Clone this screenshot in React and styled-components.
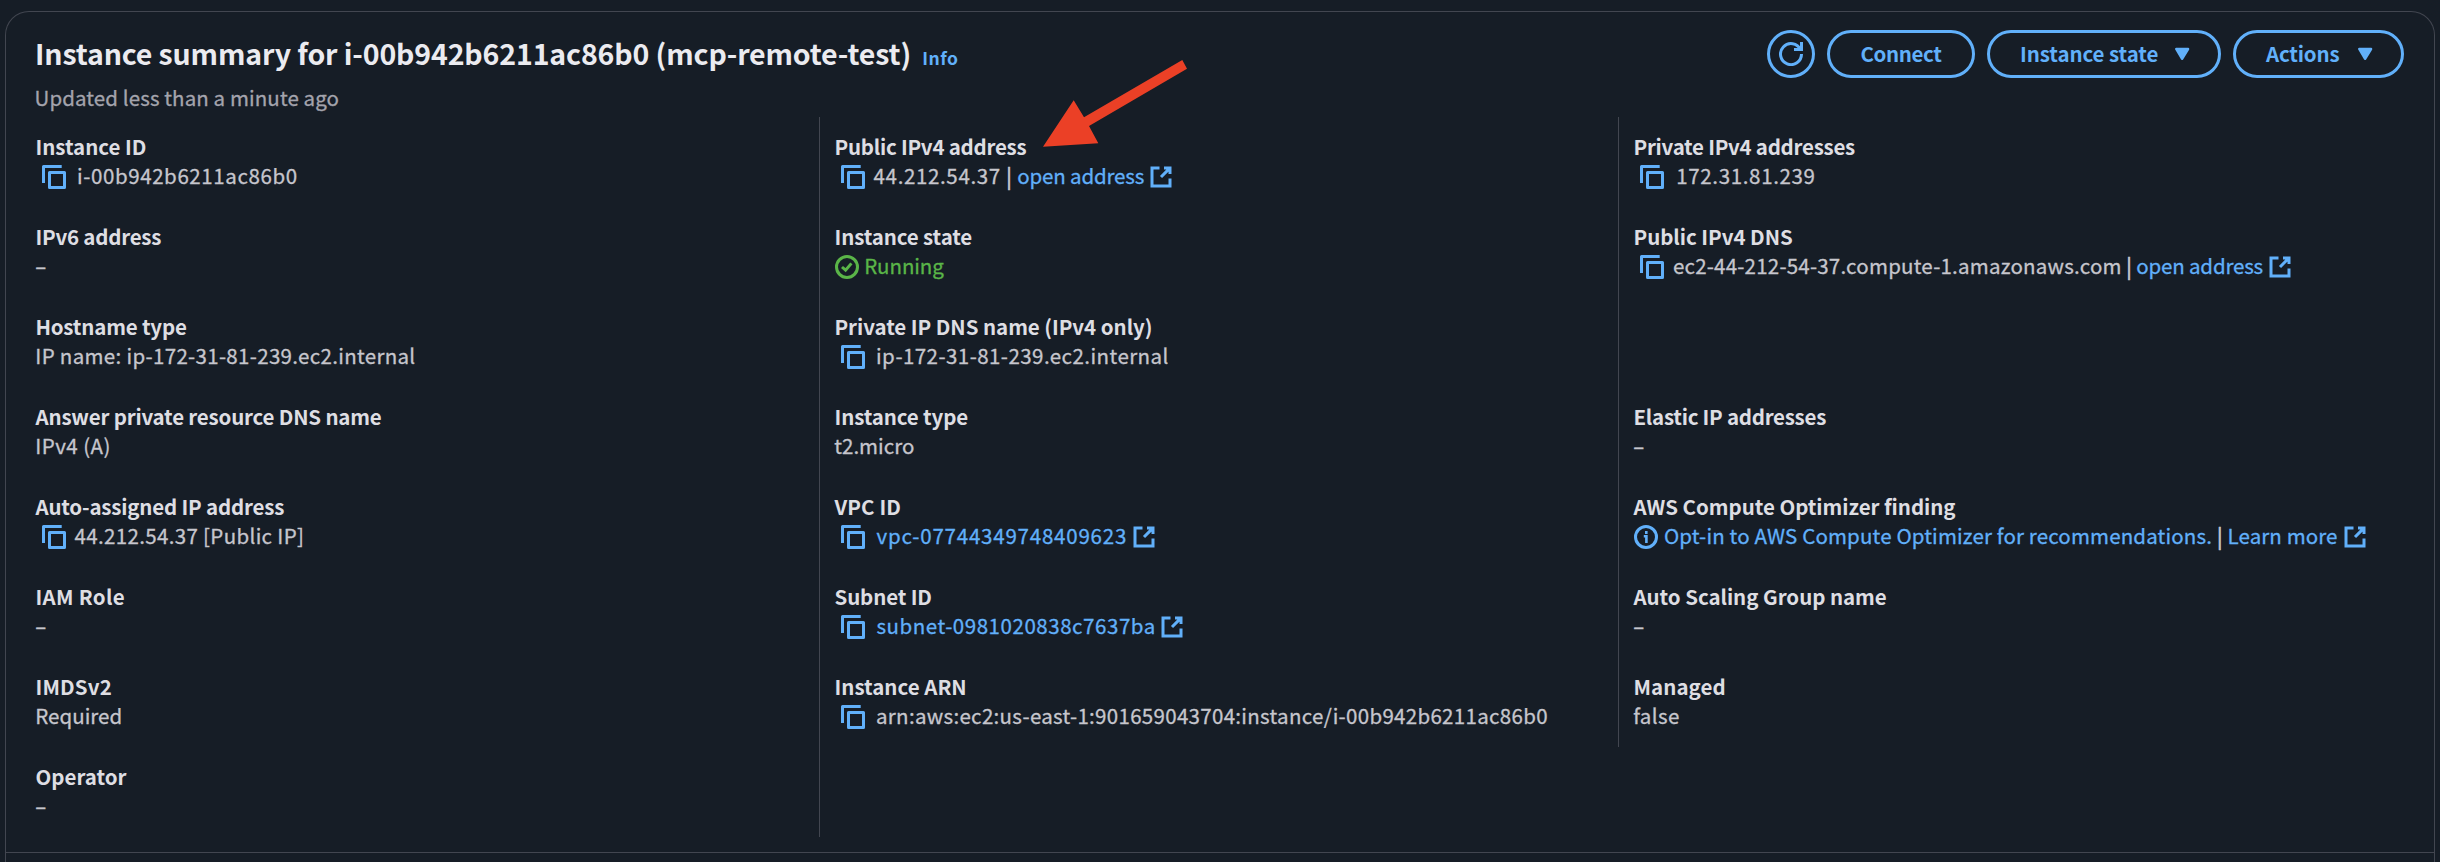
import React from "react";
import styled, { createGlobalStyle } from "styled-components";

const GlobalStyle = createGlobalStyle`
  * { box-sizing: border-box; }
  body {
    margin: 0;
    background: #161d26;
    font-family: "Noto Sans CJK SC", "Noto Sans", sans-serif;
    font-size: 20.5px;
    line-height: 30px;
    color: #c6c6cd;
  }
`;

const Page = styled.div`
  position: relative;
  display: flex;
  width: 2440px;
  height: 862px;
  padding: 11px 5px 0;
  overflow: hidden;
`;

const Panel = styled.section`
  flex: 1;
  display: flex;
  flex-direction: column;
  border: 1px solid #424650;
  border-bottom: 0;
  border-radius: 24px 24px 0 0;
`;

const Header = styled.header`
  display: flex;
  justify-content: space-between;
  height: 105px;
  padding: 18px 30px 0 29px;
`;

const Heading = styled.div`
  display: flex;
  flex-direction: column;
  gap: 11px;
  padding-top: 5px;
`;

const TitleRow = styled.div`
  display: flex;
  align-items: baseline;
  gap: 11px;
`;

const Title = styled.h1`
  margin: 0;
  font-size: 28.5px;
  font-weight: 700;
  line-height: 36px;
  letter-spacing: -0.13px;
  color: #ebebf0;
  white-space: nowrap;
`;

const InfoLink = styled.a`
  font-size: 17.5px;
  font-weight: 700;
  line-height: 24px;
  letter-spacing: 0.5px;
  color: #61b0fa;
`;

const Description = styled.p`
  margin: 0 0 0 -0.5px;
  letter-spacing: 0.1px;
  color: #a4a4ad;
  -webkit-text-stroke: 0.3px currentColor;
`;

const Toolbar = styled.div`
  display: flex;
  gap: 12px;
`;

const Button = styled.button`
  display: flex;
  align-items: center;
  justify-content: ${(p) => (p.$menu ? "space-between" : "center")};
  width: ${(p) => p.$width}px;
  height: 48px;
  padding: ${(p) => (p.$menu ? "0 24px 0 30px" : "0")};
  border: 3px solid #61b0fa;
  border-radius: 24px;
  background: transparent;
  color: #61b0fa;
  font: 700 20.5px/30px "Noto Sans CJK SC", "Noto Sans", sans-serif;
  letter-spacing: ${(p) => p.$track || 0}px;
  white-space: nowrap;

  span { margin-top: -2px; }
`;

const Columns = styled.div`
  display: grid;
  grid-template-columns: 814px 799px 1fr;
  align-items: start;
  height: 735px;
`;

const Column = styled.dl`
  margin: 0;
  padding-left: ${(p) => p.$inset}px;
  border-right: ${(p) => (p.$divided ? "1px solid #424650" : "0")};
`;

const Field = styled.div`
  height: 90px;
  padding-top: 14px;
`;

const Label = styled.dt`
  margin-left: -0.5px;
  font-weight: 700;
  letter-spacing: ${(p) => p.$track || 0}px;
  color: #dedee3;
  white-space: nowrap;
`;

const Value = styled.dd`
  display: flex;
  height: 30px;
  margin: -1px 0 0;
  white-space: nowrap;
  -webkit-text-stroke: 0.3px currentColor;
`;

const Text = styled.span`
  margin-left: ${(p) => (p.$gap === undefined ? -0.7 : p.$gap)}px;
  letter-spacing: ${(p) => p.$track || 0}px;
`;

const Link = styled.a`
  margin-left: ${(p) => p.$gap || 0}px;
  letter-spacing: ${(p) => p.$track || 0}px;
  color: #61b0fa;
  -webkit-text-stroke: 0.3px #61b0fa;
`;

const Running = styled(Text)`
  color: #5ab548;
  -webkit-text-stroke: 0.3px #5ab548;
`;

const Separator = styled.span`
  width: ${(p) => p.$width || 17}px;
  text-align: center;
  -webkit-text-stroke: 0.7px currentColor;
`;

const Icon = styled.svg`
  flex: none;
  width: 24px;
  height: 24px;
  margin: ${(p) => p.$margin || "0"};
  fill: none;
  stroke: currentColor;
  stroke-width: 3;
  color: ${(p) => p.$color || "#61b0fa"};
`;

const Footer = styled.div`
  flex: 1;
  border-top: 1px solid #424650;
`;

const Pointer = styled.svg`
  position: absolute;
  left: 1040px;
  top: 58px;
  width: 150px;
  height: 92px;
  fill: #eb4026;
`;

const CopyIcon = () => (
  <Icon viewBox="0 0 24 24" $margin="5px 6px 0" strokeLinejoin="round">
    <path d="M19.7 1.5H1.5V18" />
    <path d="M7.5 7.5h15v15h-15z" />
  </Icon>
);

const ExternalIcon = ({ gap = 4.5 }) => (
  <Icon viewBox="0 0 24 24" $margin={`5px 0 0 ${gap}px`}>
    <path d="M15 3h6v6M20.6 3.4 12 12M21 13.6V21H3V3h7.5" />
  </Icon>
);

const RunningIcon = () => (
  <Icon viewBox="0 0 24 24" $margin="5px 0 0" $color="#5ab548">
    <circle cx="12" cy="12" r="10.5" />
    <path d="M7 12 10.6 15.2 16.4 8.4" />
  </Icon>
);

const InfoIcon = () => (
  <Icon viewBox="0 0 24 24" $margin="5px 0 0">
    <circle cx="12" cy="12" r="10.5" />
    <path d="M12.3 6v3M9.8 11.2h2.6V18" strokeWidth="2.6" />
  </Icon>
);

const RefreshIcon = () => (
  <Icon viewBox="0 0 24 24">
    <path d="M22.5 12A10.5 10.5 0 1 1 21.5 7.6M22.5 0v7.5H15" />
  </Icon>
);

const CaretIcon = () => (
  <Icon viewBox="0 0 24 24">
    <path
      d="M6.2 7h11.9l-6 9.8z"
      fill="currentColor"
      strokeWidth="2.4"
      strokeLinejoin="round"
    />
  </Icon>
);

const Item = ({ label, track, children }) => (
  <Field>
    <Label $track={track}>{label}</Label>
    <Value>{children}</Value>
  </Field>
);

const Dash = () => <Text>–</Text>;

export default function App() {
  return (
    <>
      <GlobalStyle />
      <Page>
        <Panel>
          <Header>
            <Heading>
              <TitleRow>
                <Title>Instance summary for i-00b942b6211ac86b0 (mcp-remote-test)</Title>
                <InfoLink>Info</InfoLink>
              </TitleRow>
              <Description>Updated less than a minute ago</Description>
            </Heading>
            <Toolbar>
              <Button $width={48} aria-label="Refresh"><RefreshIcon /></Button>
              <Button $width={148} $track={-0.37}><span>Connect</span></Button>
              <Button $width={234} $track={-0.08} $menu><span>Instance state</span><CaretIcon /></Button>
              <Button $width={171} $track={-0.19} $menu><span>Actions</span><CaretIcon /></Button>
            </Toolbar>
          </Header>

          <Columns>
            <Column $inset={30} $divided>
              <Item label="Instance ID" track={-0.03}>
                <CopyIcon />
                <Text $gap={5} $track={0.6}>i-00b942b6211ac86b0</Text>
              </Item>
              <Item label="IPv6 address" track={-0.23}><Dash /></Item>
              <Item label="Hostname type" track={-0.19}>
                <Text $track={0.32}>IP name: ip-172-31-81-239.ec2.internal</Text>
              </Item>
              <Item label="Answer private resource DNS name" track={-0.19}>
                <Text $track={0.45}>IPv4 (A)</Text>
              </Item>
              <Item label="Auto-assigned IP address" track={-0.19}>
                <CopyIcon />
                <Text $gap={2.6} $track={0.34}>44.212.54.37 [Public IP]</Text>
              </Item>
              <Item label="IAM Role" track={0.3}><Dash /></Item>
              <Item label="IMDSv2" track={0.15}>
                <Text $track={0.02}>Required</Text>
              </Item>
              <Item label="Operator"><Dash /></Item>
            </Column>

            <Column $inset={15} $divided>
              <Item label="Public IPv4 address" track={-0.24}>
                <CopyIcon />
                <Text $gap={2.6} $track={0.64}>44.212.54.37</Text>
                <Separator $width={16.5}>|</Separator>
                <Link $track={-0.17}>open address</Link>
                <ExternalIcon gap={5} />
              </Item>
              <Item label="Instance state" track={-0.13}>
                <RunningIcon />
                <Running $gap={5.2} $track={-0.09}>Running</Running>
              </Item>
              <Item label="Private IP DNS name (IPv4 only)" track={-0.05}>
                <CopyIcon />
                <Text $gap={5} $track={0.45}>ip-172-31-81-239.ec2.internal</Text>
              </Item>
              <Item label="Instance type" track={-0.13}><Text $track={0}>t2.micro</Text></Item>
              <Item label="VPC ID" track={0.12}>
                <CopyIcon />
                <Link $gap={5.6} $track={0.79}>vpc-07744349748409623</Link>
                <ExternalIcon />
              </Item>
              <Item label="Subnet ID" track={-0.13}>
                <CopyIcon />
                <Link $gap={5.4} $track={0.55}>subnet-0981020838c7637ba</Link>
                <ExternalIcon />
              </Item>
              <Item label="Instance ARN" track={0}>
                <CopyIcon />
                <Text $gap={5} $track={0.31}>
                  arn:aws:ec2:us-east-1:901659043704:instance/i-00b942b6211ac86b0
                </Text>
              </Item>
            </Column>

            <Column $inset={15}>
              <Item label="Private IPv4 addresses" track={-0.26}>
                <CopyIcon />
                <Text $gap={6.2} $track={0.66}>172.31.81.239</Text>
              </Item>
              <Item label="Public IPv4 DNS" track={-0.04}>
                <CopyIcon />
                <Text $gap={2.9} $track={0.22}>ec2-44-212-54-37.compute-1.amazonaws.com</Text>
                <Separator $width={14.5}>|</Separator>
                <Link $track={-0.17}>open address</Link>
                <ExternalIcon />
              </Item>
              <Field />
              <Item label="Elastic IP addresses" track={-0.26}><Dash /></Item>
              <Item label="AWS Compute Optimizer finding" track={-0.04}>
                <InfoIcon />
                <Link $gap={6} $track={0.15}>Opt-in to AWS Compute Optimizer for recommendations.</Link>
                <Separator $width={15.5}>|</Separator>
                <Link $track={0.1}>Learn more</Link>
                <ExternalIcon gap={5} />
              </Item>
              <Item label="Auto Scaling Group name" track={-0.04}><Dash /></Item>
              <Item label="Managed" track={0.06}><Text $track={0.35}>false</Text></Item>
            </Column>
          </Columns>
          <Footer />
        </Panel>

        <Pointer viewBox="1040 58 150 92">
          <path d="M1043 146.7 1073.7 100.3 1084 117.3 1182.3 60 1187 68.7 1089 126 1098.3 143.3z" />
        </Pointer>
      </Page>
    </>
  );
}
